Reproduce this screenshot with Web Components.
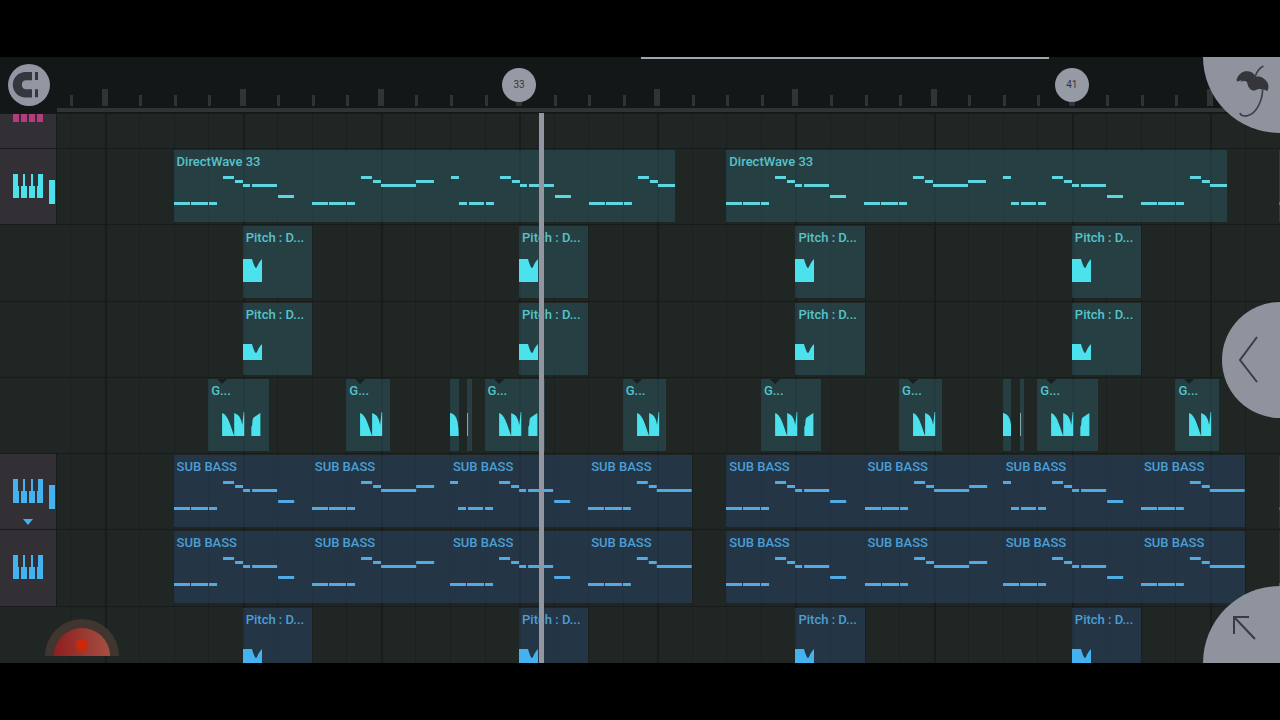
<!DOCTYPE html>
<html lang="en">
<head>
<meta charset="utf-8">
<title>Playlist</title>
<style>
    :root {
        /* one column per half step, shared by the ruler, the lanes and the playhead */
        --columns: repeat(283, minmax(0, 1fr)) minmax(0, .2fr);
        --header: 57px;
        --control: #8e939e;
    }

    body {
        margin: 0;
        background: #000;
        font-family: Roboto, "Open Sans", sans-serif;
    }
</style>
</head>
<body>
<playlist-view></playlist-view>

<script>
class TimeRuler extends HTMLElement {
    constructor() {
        super();
        this.attachShadow({ mode: 'open' });
    }

    connectedCallback() {
        let ticks = '';
        for (let i = 0; i < 35; i++) {
            const major = i % 4 === 1 ? ' class="major"' : '';
            ticks += `<i${major} style="grid-column: ${4 + i * 8} / span 2"></i>`;
        }
        this.shadowRoot.innerHTML = `
            <style>
                :host {
                    display: grid;
                    grid-template-columns: var(--header) 1fr;
                    height: 56px;
                    background: #121818;
                }

                .corner {
                    display: flex;
                    align-items: center;
                    justify-content: center;
                }

                .snap {
                    width: 42px;
                    height: 42px;
                    padding: 0;
                    border: 0;
                    border-radius: 50%;
                    background: #9196a2;
                }

                svg {
                    display: block;
                }

                .scale {
                    display: grid;
                    grid-template-columns: var(--columns);
                    grid-template-rows: 49px 3px;
                    border-bottom: 4px solid #303333;
                    margin-bottom: 1px;
                    box-sizing: border-box;
                    height: 55px;
                }

                i {
                    grid-row: 1;
                    align-self: end;
                    width: 3px;
                    height: 11px;
                    background: #303434;
                }

                i.major {
                    width: 6px;
                    height: 17px;
                    margin-left: -3px;
                }

                .marker {
                    grid-row: 1;
                    z-index: 1;
                    justify-self: center;
                    width: 34px;
                    height: 34px;
                    margin-top: 11px;
                    border-radius: 50%;
                    background: #969aa5;
                    color: #33363c;
                    font-size: 10px;
                    line-height: 34px;
                    text-align: center;
                }
            </style>
            <div class="corner">
                <button class="snap" aria-label="Snap to grid">
                    <svg width="42" height="42" fill="#35373e">
                        <path d="M24 8H17.5A12.7 12.7 0 0 0 17.5 33.4H24V25.2H17.5A4.6 4.6 0 0 1 17.5 16.2H24Z"/>
                        <path d="M27 8h3v8h-3zM27 25.3h3v8h-3z"/>
                    </svg>
                </button>
            </div>
            <div class="scale">
                ${ticks}
                <span class="marker" style="grid-column: 104 / 112">33</span>
                <span class="marker" style="grid-column: 232 / 240">41</span>
            </div>
        `;
    }
}

class TrackRow extends HTMLElement {
    constructor() {
        super();
        this.attachShadow({ mode: 'open' });
    }

    connectedCallback() {
        const head = this.getAttribute('head');
        let lines = '';
        for (let i = 0; i < 35; i++) {
            const major = i % 4 === 1 ? ' class="major"' : '';
            lines += `<i${major} style="grid-column: ${4 + i * 8}"></i>`;
        }
        const keys = `
            <svg class="keys" width="30" height="24" fill="currentColor">
                <path d="M0 0h5v12h1v12H0zM10 0h2v12h2v12H8V12h2zM18 0h2v12h2v12h-6V12h2zM25 0h5v24h-6V12h1z"/>
            </svg>`;
        this.shadowRoot.innerHTML = `
            <style>
                :host {
                    display: grid;
                    grid-template-columns: var(--header) minmax(0, 1fr);
                    min-height: 0;
                    overflow: hidden;
                    box-sizing: border-box;
                    border-top: 1px solid #171b1c;
                    background: #202624;
                }

                :host([tone="teal"]) {
                    --fill: rgba(44, 80, 88, .6);
                    --label: #57c3cb;
                    --note: #5fd5e0;
                    --wave: #4be2ee;
                }

                :host([tone="blue"]) {
                    --fill: rgba(40, 64, 92, .6);
                    --label: #4b9fd6;
                    --note: #51aae2;
                    --wave: #45b2f0;
                }

                .head {
                    display: grid;
                    grid-template-columns: 30px 6px;
                    grid-template-rows: 24px 6px;
                    column-gap: 6px;
                    align-content: start;
                    padding: 25px 0 0 13px;
                    border-right: 1px solid #171b1c;
                    background: #322f35;
                    color: var(--wave);
                }

                .head.cut {
                    display: block;
                    padding-top: 0;
                    color: #b53b7d;
                }

                .meter {
                    grid-row: 1 / 3;
                    grid-column: 2;
                    height: 24px;
                    align-self: end;
                    background: currentColor;
                }

                .fold {
                    grid-column: 1;
                    grid-row: 3;
                    justify-self: center;
                    margin-top: 10px;
                }

                svg {
                    display: block;
                }

                .lane {
                    display: grid;
                    grid-template-columns: var(--columns);
                    grid-template-rows: 100%;
                    min-height: 0;
                }

                i {
                    grid-row: 1;
                    width: 1px;
                    background: #1a201f;
                }

                i.major {
                    width: 2px;
                    background: #181d1c;
                }
            </style>
            ${head === null ? '<div></div>' : head === 'cut' ? `
                <div class="head cut">
                    <svg width="30" height="8" fill="currentColor"><path d="M0 0h6v8H0zM8 0h6v8H8zM16 0h6v8h-6zM24 0h6v8h-6z"/></svg>
                </div>` : `
                <div class="head">
                    ${keys}
                    ${head.includes('meter') ? '<span class="meter"></span>' : ''}
                    ${head.includes('fold') ? '<svg class="fold" width="10" height="6" fill="currentColor"><path d="M0 0h10L5 6z"/></svg>' : ''}
                </div>`}
            <div class="lane">${lines}<slot></slot></div>
        `;
    }
}

// note = [x, y, width], 138 units to a two-bar phrase
const low = [[0, 52, 16], [17, 52, 17], [35, 52, 8]];
const fall = [[49, 26, 11], [61, 30, 8]];
const PHRASES = {
    a: [...low, ...fall, [69, 34, 7], [78, 34, 25], [104, 45, 16]],
    b: [...low, ...fall, [69, 34, 35], [104, 30, 18]],
    c: [[0, 26, 8], [8, 52, 8], [18, 52, 15], [35, 52, 8], ...fall, [69, 34, 7], [78, 34, 25], [104, 45, 16]],
    d: [...low, ...fall, [69, 34, 35]],
    e: [[0, 52, 2]]
};

const WAVES = {
    pitch: 'M0 33H9C10 37 12 42 13 42S15 37 19 33V56H0Z',
    pitchLow: 'M0 41H9C10 45 12 50 13 50S15 45 19 41V57H0Z',
    gate: 'M14 34C20 36 22 46 26 57H14ZM26 34C32 36 33 41 34 46L35.4 33H36V57H26ZM43 57V48C45 46 43 39 46 38L52 34V57Z',
    gateShort: 'M14 34C20 36 22 46 26 57H14ZM26 34C32 36 33 41 34 46L35.4 33H36V57H26Z',
    hit: 'M0 34C6 35 9 40 9 57H0Z',
    sliver: 'M0 34H1V57H0Z'
};

class PatternClip extends HTMLElement {
    constructor() {
        super();
        this.attachShadow({ mode: 'open' });
    }

    connectedCallback() {
        const at = Number(this.getAttribute('at'));
        const span = Number(this.getAttribute('span'));
        const notes = this.getAttribute('notes');
        const wave = this.getAttribute('wave');
        const width = Math.round(span * 4.32);
        let art = '';
        if (notes) {
            [...notes].forEach((key, n) => {
                const phrase = PHRASES[key];
                phrase.forEach(([x, y, w]) => {
                    art += `<rect x="${x + Math.round(n * 138.3)}" y="${y}" width="${w}" height="3" fill="var(--note)"/>`;
                });
            });
        } else if (wave) {
            const fill = wave === 'sliver' ? '#8aa3a8' : 'var(--wave)';
            art = `<path d="${WAVES[wave]}" fill="${fill}"/>`;
            if (wave.startsWith('gate')) {
                art += '<path d="M9 0h10L14 5z" fill="#18201f"/>';
            }
        }
        this.shadowRoot.innerHTML = `
            <style>
                :host {
                    display: grid;
                    grid-row: 1;
                    grid-column: ${at + 1} / span ${span};
                    grid-template: 22px 1fr / minmax(0, 1fr);
                    min-width: 0;
                    height: 72px;
                    margin-top: 1px;
                    overflow: hidden;
                    background: var(--fill);
                }

                svg {
                    grid-area: 1 / 1 / 3 / 2;
                    display: block;
                    width: 100%;
                    height: 72px;
                }

                .label {
                    grid-area: 1 / 1;
                    padding-left: 3px;
                    color: var(--label);
                    font-size: 13px;
                    font-weight: 500;
                    line-height: 24px;
                    white-space: nowrap;
                }
            </style>
            <svg viewBox="0 0 ${width} 72" preserveAspectRatio="none">${art}</svg>
            <span class="label"><slot></slot></span>
        `;
    }
}

class EdgeButton extends HTMLElement {
    constructor() {
        super();
        this.attachShadow({ mode: 'open' });
    }

    connectedCallback() {
        this.shadowRoot.innerHTML = `
            <style>
                :host {
                    display: block;
                }

                button {
                    display: block;
                    padding: 0;
                    border: 0;
                    border-radius: inherit;
                    background: var(--control);
                    color: #3a3c45;
                }
            </style>
            <button aria-label="${this.getAttribute('label')}"><slot></slot></button>
        `;
    }
}

class PlaylistView extends HTMLElement {
    constructor() {
        super();
        this.attachShadow({ mode: 'open' });
    }

    connectedCallback() {
        this.render();
    }

    clips(list) {
        // both halves of the arrangement play the same eight bars
        return [0, 128].map(offset => list.map(([at, span, attrs, text = '']) =>
            `<pattern-clip at="${at + offset}" span="${span}" ${attrs}>${text}</pattern-clip>`
        ).join('')).join('');
    }

    render() {
        const pitch = wave => this.clips([
            [43, 16, `wave="${wave}"`, 'Pitch : D...'],
            [107, 16, `wave="${wave}"`, 'Pitch : D...']
        ]);
        const bass = third => this.clips([
            [27, 32, 'notes="a"', 'SUB BASS'],
            [59, 32, 'notes="b"', 'SUB BASS'],
            [91, 32, `notes="${third}"`, 'SUB BASS'],
            [123, 24, 'notes="d"', 'SUB BASS']
        ]);
        const gates = this.clips([
            [35, 14, 'wave="gate"', 'G...'],
            [67, 10, 'wave="gateShort"', 'G...'],
            [91, 2, 'wave="hit"'],
            [95, 1, 'wave="sliver"'],
            [99, 14, 'wave="gate"', 'G...'],
            [131, 10, 'wave="gateShort"', 'G...']
        ]);
        const next = '<pattern-clip at="283" span="1" notes="e"></pattern-clip>';

        this.shadowRoot.innerHTML = `
            <style>
                :host {
                    display: grid;
                    grid-template-rows: minmax(0, 1fr);
                    box-sizing: border-box;
                    height: 100vh;
                    padding: 57px 0;
                }

                .stage {
                    position: relative;
                    display: grid;
                    grid-template-rows: 56px minmax(0, 1fr);
                    overflow: hidden;
                }

                .body {
                    display: grid;
                    grid-template-rows: minmax(0, 1fr);
                    grid-template-columns: minmax(0, 1fr);
                }

                .tracks {
                    grid-area: 1 / 1;
                    display: grid;
                    grid-template-rows: 33fr repeat(6, 72fr) 54fr;
                    min-height: 0;
                }

                .cursor {
                    grid-area: 1 / 1;
                    z-index: 1;
                    display: grid;
                    grid-template-columns: var(--columns);
                    margin-left: var(--header);
                    pointer-events: none;
                }

                .cursor span {
                    grid-column: 113;
                    width: 5px;
                    margin-left: -2px;
                    background: #9296a1;
                }

                .scroll {
                    position: absolute;
                    inset: 0 0 auto;
                    display: grid;
                    grid-template-columns: 641fr 408fr 231fr;
                }

                .scroll span {
                    grid-column: 2;
                    height: 2px;
                    background: #a3a7ad;
                }

                edge-button {
                    position: absolute;
                    right: 0;
                    z-index: 2;
                }

                edge-button svg, .record svg {
                    display: block;
                }

                .menu {
                    top: 0;
                    border-radius: 0 0 0 100%;
                }

                .panel {
                    top: calc(50% - 58px);
                    border-radius: 58px 0 0 58px;
                }

                .expand {
                    bottom: 0;
                    border-radius: 100% 0 0 0;
                }

                .record {
                    position: absolute;
                    left: 45px;
                    bottom: 7px;
                    padding: 0;
                    border: 0;
                    background: none;
                }
            </style>
            <div class="stage">
                <time-ruler></time-ruler>
                <div class="body">
                    <div class="tracks">
                        <track-row head="cut"></track-row>
                        <track-row tone="teal" head="meter">
                            ${this.clips([[27, 116, 'notes="abcd"', 'DirectWave 33']])}${next}
                        </track-row>
                        <track-row tone="teal">${pitch('pitch')}</track-row>
                        <track-row tone="teal">${pitch('pitchLow')}</track-row>
                        <track-row tone="teal">${gates}</track-row>
                        <track-row tone="blue" head="meter fold">${bass('c')}${next}</track-row>
                        <track-row tone="blue" head="keys">${bass('a')}${next}</track-row>
                        <track-row tone="blue">${pitch('pitchLow')}</track-row>
                    </div>
                    <div class="cursor"><span></span></div>
                </div>
                <div class="scroll"><span></span></div>
                <edge-button class="menu" label="Menu">
                    <svg width="77" height="76" viewBox="0 0 231 228">
                        <path d="M102 64C106 54 114 46 126 43C140 41 152 46 158 59C172 56 188 64 195 80C198 91 196 98 192 103C188 100 184 97 179 98C172 94 163 96 154 101C146 100 139 96 137 90C134 86 134 81 132 75C126 70 118 71 113 76L116 70C110 71 106 73 103 74C100 71 101 67 102 64Z" fill="#34363c"/>
                        <path d="M181 27C170 33 161 44 156 60M179 97C178 132 160 170 134 176C122 178 113 176 111 168" fill="none" stroke="#3d4048" stroke-width="5"/>
                    </svg>
                </edge-button>
                <edge-button class="panel" label="Show panel">
                    <svg width="58" height="116" fill="none" stroke="currentColor" stroke-width="2">
                        <path d="M35 35L18 58L35 80"/>
                    </svg>
                </edge-button>
                <edge-button class="expand" label="Expand">
                    <svg width="77" height="77" fill="none" stroke="currentColor" stroke-width="2">
                        <path d="M46 31H31V48M31 31L52 53"/>
                    </svg>
                </edge-button>
                <button class="record" aria-label="Record">
                    <svg width="74" height="38">
                        <defs>
                            <linearGradient id="glow">
                                <stop offset="0" stop-color="#8f1f1f"/>
                                <stop offset="1" stop-color="#a44f42"/>
                            </linearGradient>
                        </defs>
                        <path d="M0 38A37 37 0 0 1 74 38Z" fill="#40352f"/>
                        <path d="M9 38A28 28 0 0 1 65 38Z" fill="url(#glow)"/>
                        <circle cx="37" cy="27" r="6" fill="#cc2809"/>
                    </svg>
                </button>
            </div>
        `;
    }
}

customElements.define('time-ruler', TimeRuler);
customElements.define('track-row', TrackRow);
customElements.define('pattern-clip', PatternClip);
customElements.define('edge-button', EdgeButton);
customElements.define('playlist-view', PlaylistView);
</script>
</body>
</html>
